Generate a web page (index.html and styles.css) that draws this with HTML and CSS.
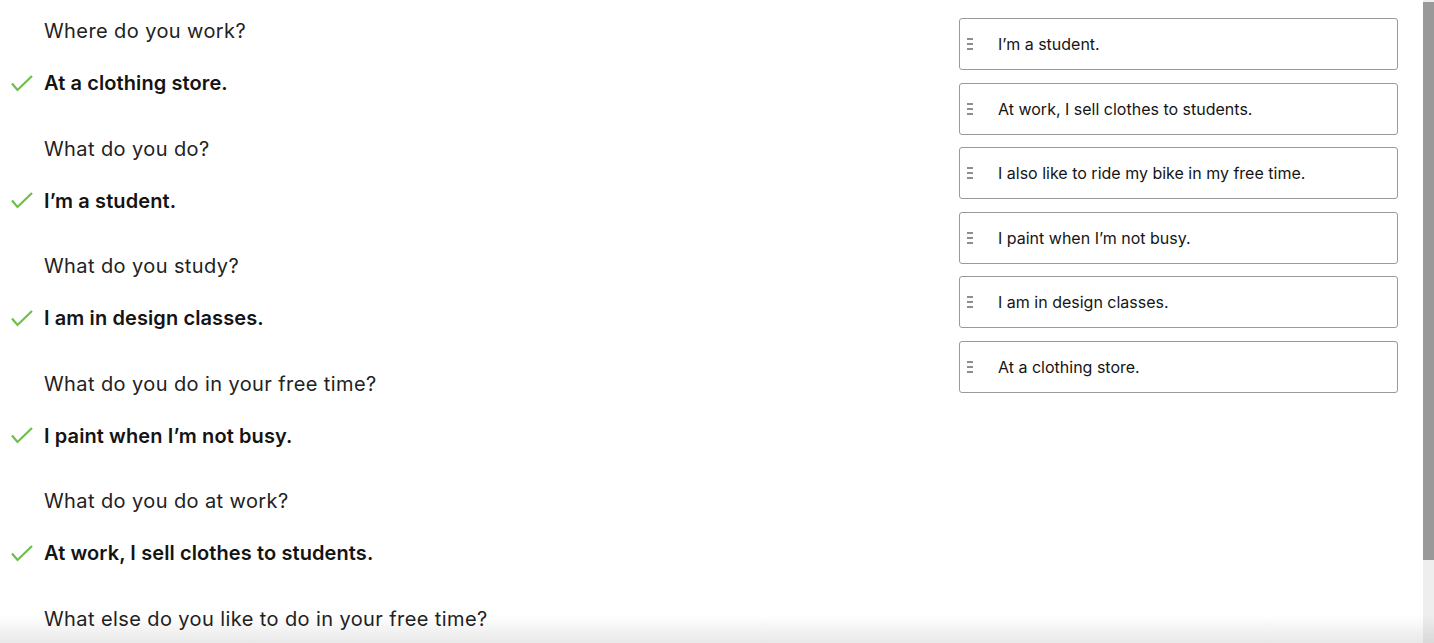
FILE: index.html
```html
<!DOCTYPE html>
<html lang="en">
<head>
<meta charset="utf-8">
<title>Conversation match</title>
<link rel="stylesheet" href="styles.css">
</head>
<body>
<div class="viewport">
  <div class="page">
    <div class="dialog">
      <div class="pair">
        <div class="question">Where do you work?</div>
        <div class="answer"><span class="check"><svg width="22" height="17" viewBox="0 0 22 17"><polyline points="1,8.5 6.5,15 21,1" fill="none" stroke="#6cbf4a" stroke-width="2.2"/></svg></span><span>At a clothing store.</span></div>
      </div>
      <div class="pair">
        <div class="question">What do you do?</div>
        <div class="answer"><span class="check"><svg width="22" height="17" viewBox="0 0 22 17"><polyline points="1,8.5 6.5,15 21,1" fill="none" stroke="#6cbf4a" stroke-width="2.2"/></svg></span><span>I’m a student.</span></div>
      </div>
      <div class="pair">
        <div class="question">What do you study?</div>
        <div class="answer"><span class="check"><svg width="22" height="17" viewBox="0 0 22 17"><polyline points="1,8.5 6.5,15 21,1" fill="none" stroke="#6cbf4a" stroke-width="2.2"/></svg></span><span>I am in design classes.</span></div>
      </div>
      <div class="pair">
        <div class="question">What do you do in your free time?</div>
        <div class="answer"><span class="check"><svg width="22" height="17" viewBox="0 0 22 17"><polyline points="1,8.5 6.5,15 21,1" fill="none" stroke="#6cbf4a" stroke-width="2.2"/></svg></span><span>I paint when I’m not busy.</span></div>
      </div>
      <div class="pair">
        <div class="question">What do you do at work?</div>
        <div class="answer"><span class="check"><svg width="22" height="17" viewBox="0 0 22 17"><polyline points="1,8.5 6.5,15 21,1" fill="none" stroke="#6cbf4a" stroke-width="2.2"/></svg></span><span>At work, I sell clothes to students.</span></div>
      </div>
      <div class="pair">
        <div class="question">What else do you like to do in your free time?</div>
      </div>
    </div>
    <div class="bank">
      <div class="card"><span class="handle"><i></i><i></i><i></i></span><span class="card-text">I’m a student.</span></div>
      <div class="card"><span class="handle"><i></i><i></i><i></i></span><span class="card-text">At work, I sell clothes to students.</span></div>
      <div class="card"><span class="handle"><i></i><i></i><i></i></span><span class="card-text">I also like to ride my bike in my free time.</span></div>
      <div class="card"><span class="handle"><i></i><i></i><i></i></span><span class="card-text">I paint when I’m not busy.</span></div>
      <div class="card"><span class="handle"><i></i><i></i><i></i></span><span class="card-text">I am in design classes.</span></div>
      <div class="card"><span class="handle"><i></i><i></i><i></i></span><span class="card-text">At a clothing store.</span></div>
    </div>
  </div>
  <div class="scrollbar"><div class="thumb"></div></div>
  <div class="fade"></div>
</div>
</body>
</html>
```
FILE: styles.css
```css
html, body {
  margin: 0;
  height: 100%;
  overflow: hidden;
  background: #fff;
}
body {
  font-family: Inter, "Liberation Sans", sans-serif;
  color: #1c1c1c;
}
.viewport {
  position: relative;
  display: flex;
  height: 643px;
  overflow: hidden;
}
.page {
  flex: 1;
  display: flex;
  align-items: flex-start;
  overflow: hidden;
}
.dialog {
  flex: 1;
  padding-top: 19px;
}
.pair {
  margin-bottom: 41.5px;
}
.question {
  padding-left: 44px;
  font-size: 20px;
  line-height: 24px;
  font-weight: 400;
  letter-spacing: 0.4px;
  color: #222;
  margin-bottom: 28px;
}
.answer {
  display: flex;
  align-items: center;
  font-size: 20px;
  line-height: 24px;
  font-weight: 600;
  letter-spacing: 0.1px;
  color: #141414;
}
.check {
  width: 33px;
  padding-left: 11px;
  display: flex;
  align-items: center;
}
.check svg {
  display: block;
}
.bank {
  width: 439px;
  margin-right: 25px;
  margin-top: 18px;
  display: flex;
  flex-direction: column;
  gap: 12.6px;
}
.card {
  box-sizing: border-box;
  height: 52px;
  border: 1px solid #9a9a9a;
  border-radius: 3px;
  display: flex;
  align-items: center;
  padding-left: 7px;
}
.handle {
  width: 31px;
  display: flex;
  flex-direction: column;
  gap: 3px;
}
.handle i {
  display: block;
  width: 6px;
  height: 2px;
  background: #8e8e8e;
}
.card-text {
  font-size: 16px;
  color: #151515;
}
.scrollbar {
  width: 11px;
  flex: none;
  background: #eeeeee;
  padding-top: 2px;
}
.thumb {
  height: 558px;
  background: #999999;
}
.fade {
  position: absolute;
  left: 0;
  right: 0;
  bottom: 0;
  height: 28px;
  background: linear-gradient(to bottom, rgba(0,0,0,0), rgba(0,0,0,0.09));
  pointer-events: none;
}
```
